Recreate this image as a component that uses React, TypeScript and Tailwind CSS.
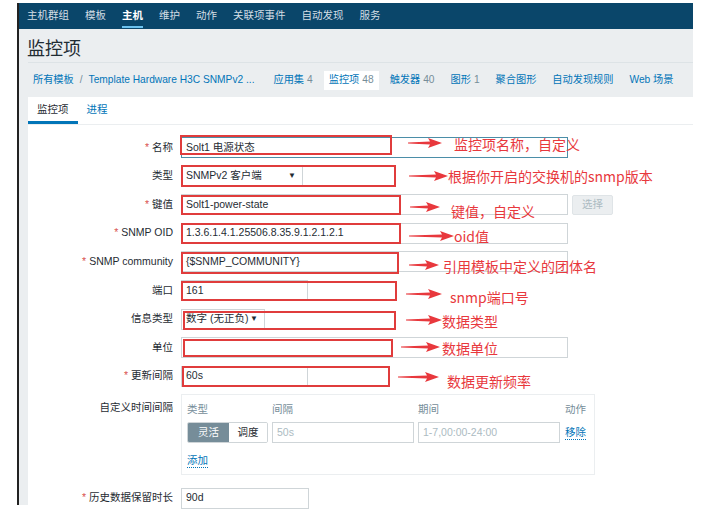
import React from 'react';

const RED = '#e8383d';

const navItems = ['主机群组', '模板', '主机', '维护', '动作', '关联项事件', '自动发现', '服务'];

const headerTabs: { label: string; count?: string; active?: boolean }[] = [
  { label: '应用集', count: '4' },
  { label: '监控项', count: '48', active: true },
  { label: '触发器', count: '40' },
  { label: '图形', count: '1' },
  { label: '聚合图形' },
  { label: '自动发现规则' },
  { label: 'Web 场景' },
];

type Row = {
  label: string;
  required?: boolean;
  kind: 'input' | 'select';
  width: string;
  value: string;
  focused?: boolean;
  button?: string;
};

const rows: Row[] = [
  { label: '名称', required: true, kind: 'input', width: 'w-[387px]', value: 'Solt1 电源状态', focused: true },
  { label: '类型', kind: 'select', width: 'w-[122px]', value: 'SNMPv2 客户端' },
  { label: '键值', required: true, kind: 'input', width: 'w-[387px]', value: 'Solt1-power-state', button: '选择' },
  { label: 'SNMP OID', required: true, kind: 'input', width: 'w-[387px]', value: '1.3.6.1.4.1.25506.8.35.9.1.2.1.2.1' },
  { label: 'SNMP community', required: true, kind: 'input', width: 'w-[387px]', value: '{$SNMP_COMMUNITY}' },
  { label: '端口', kind: 'input', width: 'w-[127px]', value: '161' },
  { label: '信息类型', kind: 'select', width: 'w-[84px]', value: '数字 (无正负)' },
  { label: '单位', kind: 'input', width: 'w-[387px]', value: '' },
  { label: '更新间隔', required: true, kind: 'input', width: 'w-[127px]', value: '60s' },
];

// red annotation boxes: left, top, right, bottom
const boxes = [
  [180, 135, 392, 155],
  [181, 165, 396, 187],
  [181, 195, 401, 215],
  [181, 223, 401, 244],
  [181, 252, 399, 274],
  [181, 281, 397, 301],
  [183, 311, 396, 330],
  [183, 339, 393, 357],
  [182, 366, 390, 387],
];

// arrow x1, x2, y, then note text, text left, text center y
const notes: [number, number, number, string, number, number][] = [
  [408, 442, 143, '监控项名称，自定义', 454, 144],
  [409, 448, 176, '根据你开启的交换机的snmp版本', 448, 176],
  [410, 440, 207, '键值，自定义', 451, 211],
  [409, 454, 236, 'oid值', 454, 236],
  [409, 439, 265, '引用模板中定义的团体名', 443, 266],
  [406, 442, 294, 'snmp端口号', 450, 297],
  [406, 442, 320, '数据类型', 442, 321],
  [401, 440, 347, '数据单位', 442, 348],
  [398, 439, 377, '数据更新频率', 447, 381],
];

function Arrow({ x1, x2, y }: { x1: number; x2: number; y: number }) {
  const l = x2 - x1;
  return (
    <svg className="absolute" style={{ left: x1, top: y - 6 }} width={l} height={12} viewBox={`0 0 ${l} 12`}>
      <polygon
        fill={RED}
        points={`0,5.6 ${l - 12},4.6 ${l - 14},1 ${l},6 ${l - 14},11 ${l - 12},7.4 0,6.4`}
      />
    </svg>
  );
}

function Field({ row }: { row: Row }) {
  if (row.kind === 'select') {
    return (
      <div className={`${row.width} h-[21px] border border-[#cfd5d8] bg-white flex items-center justify-between pl-[4px] pr-[6px]`}>
        <span>{row.value}</span>
        <span className="text-[8px]">▼</span>
      </div>
    );
  }
  return (
    <div className="flex items-center gap-[4px]">
      <div
        className={`${row.width} h-[21px] border bg-white flex items-center px-[4px] ${
          row.focused ? 'border-[#4b8ea8]' : 'border-[#cfd5d8]'
        }`}
      >
        {row.value}
      </div>
      {row.button && (
        <div className="w-[41px] h-[20px] border border-[#dfe4e7] bg-[#ebeef0] rounded-[2px] flex items-center justify-center text-[#acbbc2]">
          {row.button}
        </div>
      )}
    </div>
  );
}

function Label({ row }: { row: Row }) {
  return (
    <div className="text-right">
      {row.required && <span className="text-[#d9534f] mr-[3px]">*</span>}
      {row.label}
    </div>
  );
}

export default function App() {
  return (
    <div className="relative w-[722px] h-[511px] bg-white overflow-hidden font-['Liberation_Sans','Noto_Sans_CJK_SC',sans-serif] text-[10.5px] text-[#1f2c33]">
      <div className="ml-[17px] mt-[3px] w-[676px] h-[502px] border-l-2 border-[#222] bg-[#ebeef0] flex flex-col">
        {/* top menu */}
        <div className="h-[26px] bg-[#0a466a] flex items-center gap-[16px] pl-[8px] shrink-0 whitespace-nowrap">
          {navItems.map((item) => (
            <div
              key={item}
              className={`relative h-full flex items-center ${
                item === '主机' ? 'text-white font-bold' : 'text-[#d4dee5]'
              }`}
            >
              {item}
              {item === '主机' && <div className="absolute left-0 right-0 bottom-[1px] h-[2px] bg-[#6cc2ef]" />}
            </div>
          ))}
        </div>

        <div className="flex-1 pl-[9px] flex flex-col">
          {/* title */}
          <div className="h-[34px] border-b border-[#dde3e6] flex items-center pt-[3px]">
            <h1 className="text-[18px] ml-[-1px] text-[#1f2c33] font-['Noto_Sans_CJK_SC',sans-serif]">监控项</h1>
          </div>

          {/* breadcrumbs */}
          <div className="h-[34px] flex items-center text-[#0275b8] whitespace-nowrap text-[10.2px]">
            <span className="ml-[5px] shrink-0">所有模板</span>
            <span className="mx-[6px] text-[#768d99] shrink-0">/</span>
            <span className="shrink-0">Template Hardware H3C SNMPv2 ...</span>
            <div className="flex items-center ml-[14px] gap-[6px] shrink-0">
              {headerTabs.map((t) => (
                <div
                  key={t.label}
                  className={`h-[19px] px-[5px] flex items-center gap-[3px] shrink-0 ${t.active ? 'bg-white' : ''}`}
                >
                  <span>{t.label}</span>
                  {t.count && <span className="text-[#768d99]">{t.count}</span>}
                </div>
              ))}
            </div>
          </div>

          {/* white panel */}
          <div className="flex-1 bg-white flex flex-col">
            <div className="h-[28px] border-b border-[#ebeef0] flex items-end">
              <div className="h-full px-[9px] flex items-center border-b-[3px] border-[#0275b8] pt-[2px]">监控项</div>
              <div className="h-full px-[9px] flex items-center text-[#0275b8] pb-[1px]">进程</div>
            </div>

            <div className="pt-[12px] grid grid-cols-[145px_1fr] gap-x-[8px] gap-y-[7.6px] items-center">
              {rows.map((row) => (
                <React.Fragment key={row.label}>
                  <Label row={row} />
                  <Field row={row} />
                </React.Fragment>
              ))}

              <div className="text-right self-start pt-[6px]">自定义时间间隔</div>
              <div className="w-[414px] border border-[#ebeef0] pl-[5px] pt-[7px] pb-[6px]">
                <div className="grid grid-cols-[81px_142px_142px_auto] gap-x-[4px] gap-y-[4px] items-center">
                  <div className="text-[#768d99]">类型</div>
                  <div className="text-[#768d99]">间隔</div>
                  <div className="text-[#768d99]">期间</div>
                  <div className="text-[#768d99] ml-[1px]">动作</div>
                  <div className="flex h-[21px] border border-[#cfd5d8] rounded-[2px] overflow-hidden">
                    <div className="w-[41px] bg-[#768d99] text-white flex items-center justify-center">灵活</div>
                    <div className="flex-1 bg-white flex items-center justify-center">调度</div>
                  </div>
                  <div className="h-[21px] border border-[#cfd5d8] flex items-center px-[4px] text-[#acbbc2]">50s</div>
                  <div className="h-[21px] border border-[#cfd5d8] flex items-center px-[4px] text-[#acbbc2]">1-7,00:00-24:00</div>
                  <div className="ml-[1px] text-[#0275b8] border-b border-dotted border-[#0275b8] leading-[13px] w-fit">移除</div>
                </div>
                <div className="mt-[11px] text-[#0275b8] border-b border-dotted border-[#0275b8] leading-[13px] w-fit">添加</div>
              </div>

              <div className="text-right mt-[5px]">
                <span className="text-[#d9534f] mr-[3px]">*</span>历史数据保留时长
              </div>
              <div className="mt-[5px] w-[128px] h-[21px] border border-[#cfd5d8] flex items-center px-[4px]">90d</div>
            </div>
          </div>
        </div>
      </div>

      {/* red annotations drawn over the screenshot */}
      {boxes.map(([l, t, r, b], i) => (
        <div
          key={i}
          className="absolute border-2 border-[#e03c3c]"
          style={{ left: l, top: t, width: r - l, height: b - t }}
        />
      ))}
      {notes.map(([x1, x2, y, text, tx, ty]) => (
        <React.Fragment key={text}>
          <Arrow x1={x1} x2={x2} y={y} />
          <div
            className="absolute text-[14px] leading-[18px] whitespace-nowrap text-[#e8383d] font-['Noto_Sans_CJK_SC',sans-serif]"
            style={{ left: tx, top: ty - 9 }}
          >
            {text}
          </div>
        </React.Fragment>
      ))}
    </div>
  );
}
